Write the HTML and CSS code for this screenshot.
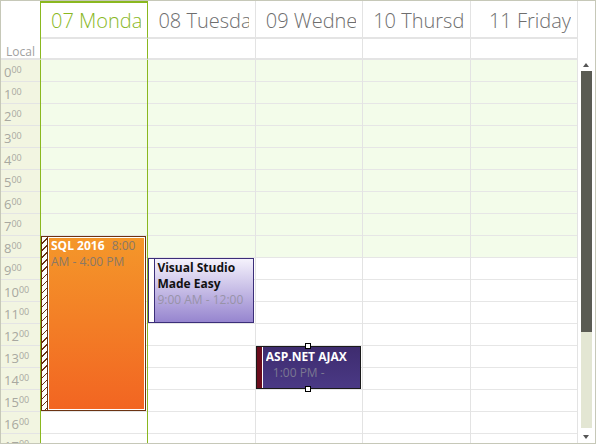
FILE: index.html
```html
<!DOCTYPE html>
<html>
<head>
<title>Scheduler</title>
<link rel="stylesheet" href="styles.css">
</head>
<body>

<div class="scheduler">
	<div class="head">
		<div class="hcell corner"></div>
		<div class="hcell day-head today"><span>07 Monday</span></div>
		<div class="hcell day-head"><span>08 Tuesday</span></div>
		<div class="hcell day-head"><span>09 Wednesday</span></div>
		<div class="hcell day-head"><span>10 Thursday</span></div>
		<div class="hcell day-head"><span>11 Friday</span></div>
		<div class="hcell spacer"></div>

		<div class="lcell corner-local">Local</div>
		<div class="lcell today"></div>
		<div class="lcell"></div>
		<div class="lcell"></div>
		<div class="lcell"></div>
		<div class="lcell"></div>
		<div class="lcell spacer"></div>
	</div>

	<div class="body">
		<div class="times">
			<div class="tlabel">0<sup>00</sup></div>
			<div class="tlabel">1<sup>00</sup></div>
			<div class="tlabel">2<sup>00</sup></div>
			<div class="tlabel">3<sup>00</sup></div>
			<div class="tlabel">4<sup>00</sup></div>
			<div class="tlabel">5<sup>00</sup></div>
			<div class="tlabel">6<sup>00</sup></div>
			<div class="tlabel">7<sup>00</sup></div>
			<div class="tlabel">8<sup>00</sup></div>
			<div class="tlabel">9<sup>00</sup></div>
			<div class="tlabel">10<sup>00</sup></div>
			<div class="tlabel">11<sup>00</sup></div>
			<div class="tlabel">12<sup>00</sup></div>
			<div class="tlabel">13<sup>00</sup></div>
			<div class="tlabel">14<sup>00</sup></div>
			<div class="tlabel">15<sup>00</sup></div>
			<div class="tlabel">16<sup>00</sup></div>
			<div class="tlabel">17<sup>00</sup></div>
		</div>

		<div class="day today" id="mon">
			<div class="slots"></div>
			<div class="appt sql">
				<div class="strip"></div>
				<div class="content">
					<div class="text"><b class="title">SQL 2016</b> <span class="time">8:00 AM - 4:00 PM</span></div>
				</div>
			</div>
		</div>

		<div class="day" id="tue">
			<div class="slots"></div>
			<div class="appt vs">
				<div class="strip"></div>
				<div class="content">
					<div class="text"><b class="title">Visual Studio Made Easy</b>
					<span class="time">9:00 AM - 12:00<br>PM</span></div>
				</div>
			</div>
		</div>

		<div class="day" id="wed">
			<div class="slots"></div>
			<div class="appt ajax selected">
				<div class="strip"></div>
				<div class="content">
					<div class="text"><b class="title">ASP.NET AJAX</b> <span class="time">1:00 PM -<br>3:00 PM</span></div>
				</div>
				<i class="handle top"></i>
				<i class="handle bottom"></i>
			</div>
		</div>

		<div class="day" id="thu">
			<div class="slots"></div>
		</div>

		<div class="day" id="fri">
			<div class="slots"></div>
		</div>

		<div class="vscroll">
			<div class="arrow up"></div>
			<div class="track">
				<div class="thumb"></div>
			</div>
			<div class="arrow down"></div>
		</div>
	</div>
</div>

<script>
	//fill every day column with 18 hour slots, first 9 are the non working hours
	const days = document.querySelectorAll('.day .slots');
	days.forEach(function(slots){
		for (var i = 0; i < 18; i++) {
			var slot = document.createElement('div');
			slot.className = i < 9 ? 'slot off' : 'slot';
			slots.appendChild(slot);
		}
	});
</script>

</body>
</html>
```

FILE: styles.css
```css
body {
	margin: 0;
	padding: 0;
	font-family: "Segoe UI", "Open Sans", sans-serif;
}

.scheduler {
	width: 596px;
	height: 444px;
	box-sizing: border-box;
	border: 1px solid #c6c8b8;
	background: #fff;
	overflow: hidden;
}

/* header */

.head {
	display: grid;
	grid-template-columns: 40px repeat(5, minmax(0, 1fr)) 17px;
	grid-template-rows: 38px 21px;
}

.hcell, .lcell {
	box-sizing: border-box;
	min-width: 0;
	border-right: 1px solid #e3e3e3;
	border-bottom: 2px solid #e4e4e4;
}

.corner {
	border-bottom: none;
	border-right-color: #8ab81f;
}

.day-head {
	padding: 3px 6px 0 10px;
	line-height: 33px;
	font-size: 20px;
	font-weight: 300;
	color: #6e6e6e;
	text-align: right;
	white-space: nowrap;
}

.day-head span {
	display: block;
	overflow: hidden;
}

.day-head.today {
	color: #8ab81f;
	box-shadow: inset 0 2px #8ab81f;
	border-right-color: #8ab81f;
}

.lcell.today {
	border-right-color: #8ab81f;
}

.corner-local {
	border-right-color: #8ab81f;
	font-size: 12px;
	color: #a0a0a0;
	text-align: right;
	padding: 7px 5px 0 0;
	line-height: 12px;
}

.spacer {
	border: none;
}

/* body */

.body {
	display: grid;
	grid-template-columns: 40px repeat(5, minmax(0, 1fr)) 17px;
	height: 383px;
	overflow: hidden;
}

.times {
	background: #f2f5e1;
	border-right: 1px solid #8ab81f;
}

.tlabel {
	height: 21px;
	border-bottom: 1px solid #e4e4e4;
	padding-left: 3px;
	font-size: 13px;
	line-height: 19px;
	color: #a8a8a0;
}

.tlabel sup {
	font-size: 9px;
	vertical-align: 4px;
}

.day {
	display: grid;
	grid-template-rows: repeat(18, 22px);
	grid-template-columns: 100%;
	border-right: 1px solid #e3e3e3;
	min-width: 0;
}

.day.today {
	border-right-color: #8ab81f;
}

.slots {
	grid-row: 1 / -1;
	grid-column: 1;
}

.slot {
	height: 21px;
	border-bottom: 1px solid #e6e6e6;
}

.slot.off {
	background: #f3fcea;
}

/* appointments */

.appt {
	grid-column: 1;
	position: relative;
	z-index: 1;
	display: flex;
	margin: 0 1px 1px 0;
	border: 1px solid;
	font-size: 12px;
	line-height: 16px;
}

.appt .strip {
	width: 5px;
	flex: none;
	border-right: 1px solid;
}

.appt .content {
	flex: 1;
	min-width: 0;
	overflow: hidden;
	padding: 1px 2px;
}

.appt .text {
	overflow: hidden;
}

.appt .title {
	font-weight: bold;
}

.appt .time {
	margin-left: 4px;
}

.sql {
	grid-row: 9 / span 8;
	border-color: #6b3312;
}

.sql .strip {
	border-right-color: #6b3312;
	background: repeating-linear-gradient(135deg, #fff 0 4px, #6b3312 4px 5px);
}

.sql .content {
	border: 1px solid #fff;
	padding: 0 2px;
	background: linear-gradient(#f4972a, #f26522);
	color: #fff;
}

.sql .time {
	color: #8a7866;
}

.vs {
	grid-row: 10 / span 3;
	border-color: #3b2e79;
}

.vs .strip {
	background: #fff;
	border-right-color: #3b2e79;
}

.vs .content {
	padding: 1px 2px;
	background: linear-gradient(#f5f2fc, #9685cf);
	color: #111;
}

.vs .text {
	max-height: 48px;
}

.vs .time {
	display: block;
	margin: 0;
	color: #9893a8;
}

.ajax {
	grid-row: 14 / span 2;
	border-color: #1a1a1a;
}

.ajax .strip {
	background: #6a0c1c;
	border-right-color: #fff;
}

.ajax .content {
	padding: 2px 3px;
	background: linear-gradient(#3e2c6f, #4a3985);
	color: #fff;
}

.ajax .text {
	max-height: 32px;
}

.ajax .time {
	margin-left: 7px;
	color: #7b7892;
}

.handle {
	position: absolute;
	left: 50%;
	width: 4px;
	height: 4px;
	margin-left: -3px;
	background: #fff;
	border: 1px solid #000;
}

.handle.top {
	top: -4px;
}

.handle.bottom {
	bottom: -4px;
}

/* scrollbar */

.vscroll {
	display: flex;
	flex-direction: column;
	padding-left: 3px;
	padding-right: 3px;
}

.arrow {
	position: relative;
	flex: none;
}

.arrow.up {
	height: 11px;
}

.arrow.down {
	height: 15px;
}

.arrow::before {
	content: "";
	position: absolute;
	left: 2px;
	border-left: 3.5px solid transparent;
	border-right: 3.5px solid transparent;
}

.arrow.up::before {
	top: 3px;
	border-bottom: 4px solid #555;
}

.arrow.down::before {
	top: 7px;
	border-top: 4px solid #555;
}

.track {
	flex: none;
	height: 357px;
	background: #e3e6d3;
}

.thumb {
	height: 261px;
	background: #5a5b53;
}
```
